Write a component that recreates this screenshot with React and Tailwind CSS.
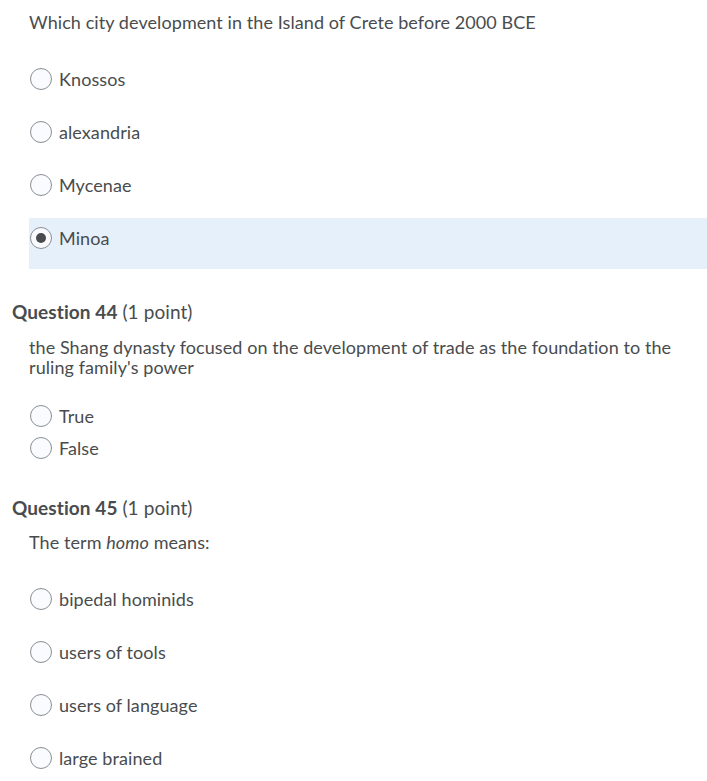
import React from "react";

function Radio({ checked }) {
  return (
    <span className="flex h-[22px] w-[22px] shrink-0 items-center justify-center rounded-full border border-[#8a8f94] bg-[#f9fbff]">
      {checked && <span className="h-[10px] w-[10px] rounded-full bg-[#494c4e]" />}
    </span>
  );
}

function Option({ label, checked, tight }) {
  return (
    <div
      className={
        "flex items-center gap-[7px] pl-[1px] " +
        (tight ? "h-[32px] " : "mb-[2px] h-[51px] pb-[11px] ") +
        (checked ? "bg-[#e6f0fb]" : "")
      }
    >
      <Radio checked={checked} />
      <span>{label}</span>
    </div>
  );
}

function Heading({ num }) {
  return (
    <div className="pl-[12px] text-[19px]">
      <span className="font-bold">Question {num}</span> (1 point)
    </div>
  );
}

export default function App() {
  return (
    <div
      className="w-[707px] bg-white text-[18px] leading-[20px] tracking-[0.08px] text-[#494c4e]"
      style={{ fontFamily: "Lato, 'Open Sans', sans-serif" }}
    >
      <div className="pl-[29px] pt-[12px]">
        <div>Which city development in the Island of Crete before 2000 BCE</div>
        <div className="mt-[27px]">
          <Option label="Knossos" />
          <Option label="alexandria" />
          <Option label="Mycenae" />
          <Option label="Minoa" checked />
        </div>
      </div>

      <div className="mt-[33px]">
        <Heading num="44" />
        <div className="mt-[15px] pl-[29px] pr-[20px]">
          the Shang dynasty focused on the development of trade as the foundation to the ruling family's power
        </div>
        <div className="mt-[23px] pl-[29px]">
          <Option label="True" tight />
          <Option label="False" tight />
        </div>
      </div>

      <div className="mt-[34px]">
        <Heading num="45" />
        <div className="mt-[14px] pl-[29px]">
          The term <i>homo</i> means:
        </div>
        <div className="mt-[27px] pl-[29px]">
          <Option label="bipedal hominids" />
          <Option label="users of tools" />
          <Option label="users of language" />
          <Option label="large brained" />
        </div>
      </div>
    </div>
  );
}
